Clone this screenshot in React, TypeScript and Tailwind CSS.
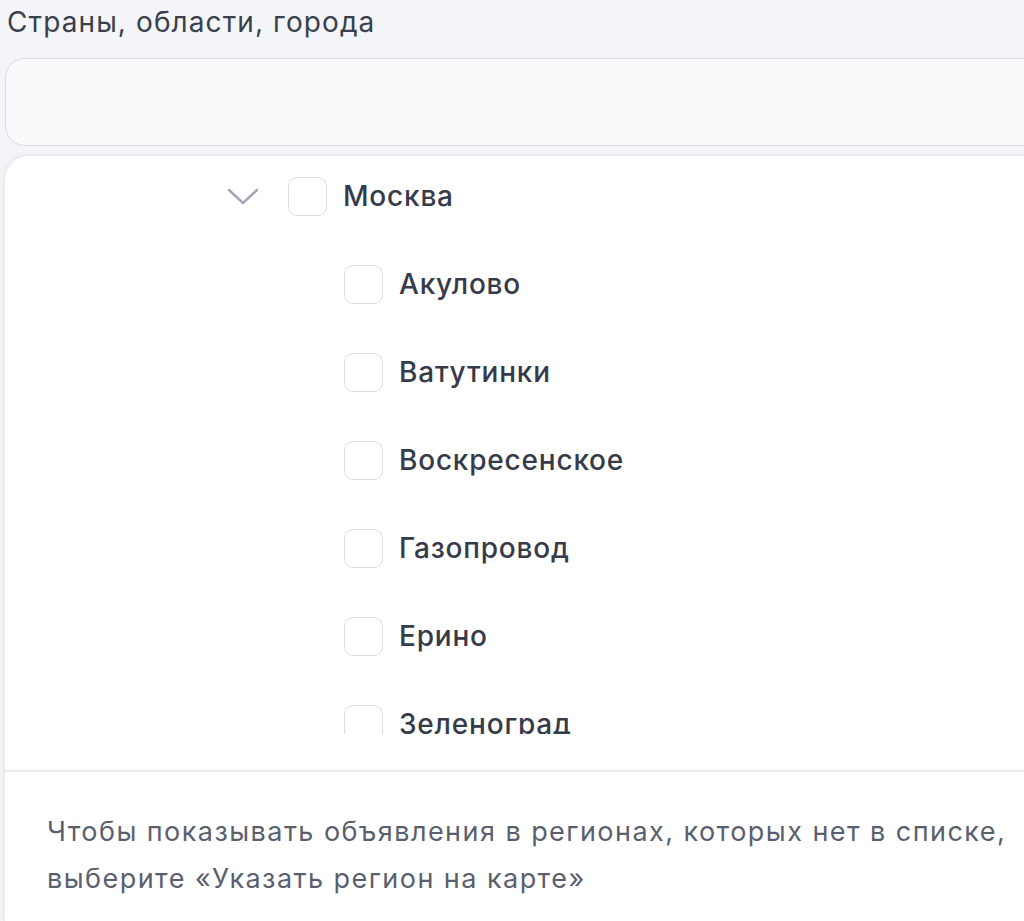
const children = ['Акулово', 'Ватутинки', 'Воскресенское', 'Газопровод', 'Ерино', 'Зеленоград', 'Зябликово'];

function Checkbox() {
  return <span className="block h-[39px] w-[39px] shrink-0 rounded-[9px] border-[1.5px] border-[#dcdde4] bg-white" />;
}

function Chevron() {
  return (
    <svg width="32" height="18" viewBox="0 0 32 18" fill="none" className="ml-[222px]">
      <polyline points="2,3 16,16 30,3" stroke="#a1a7b5" strokeWidth="2.4" strokeLinecap="round" strokeLinejoin="round" />
    </svg>
  );
}

export default function App() {
  return (
    <div className="h-[921px] w-[1024px] overflow-hidden bg-[#f4f5f8] text-[#363b49]" style={{ fontFamily: 'Inter, "Noto Sans", sans-serif' }}>
      <div className="pl-[7px] pt-[4px] text-[28px] leading-[36px] tracking-[1.1px] text-[#3a3f4c]">
        Страны, области, города
      </div>
      <div className="ml-[5px] mt-[18px] h-[88px] w-[1060px] rounded-[20px] border-[1.5px] border-[#dadbe3] bg-[#fafafc]" />
      <div className="ml-[5px] mt-[10px] w-[1060px] rounded-tl-[24px] bg-white shadow-[0_0_6px_rgba(40,50,80,0.12)]">
        <div className="flex h-[578px] flex-col gap-2 overflow-hidden">
          <div className="flex h-[80px] shrink-0 items-center">
            <Chevron />
            <span className="ml-[29px]"><Checkbox /></span>
            <span className="ml-[16px] text-[28px] font-medium tracking-[0.8px]">Москва</span>
          </div>
          {children.map((c) => (
            <div key={c} className="flex h-[80px] shrink-0 items-center pl-[339px]">
              <Checkbox />
              <span className="ml-[16px] text-[28px] font-medium tracking-[0.8px]">{c}</span>
            </div>
          ))}
        </div>
        <div className="h-[36px]" />
        <div className="border-t-[2px] border-[#ececf0] pb-[20px] pl-[42px] pt-[36px] text-[27px] leading-[47px] tracking-[1.45px] text-[#5a5f6e]">
          <div className="whitespace-nowrap">Чтобы показывать объявления в регионах, которых нет в списке,</div>
          <div className="whitespace-nowrap">выберите «Указать регион на карте»</div>
        </div>
      </div>
    </div>
  );
}
